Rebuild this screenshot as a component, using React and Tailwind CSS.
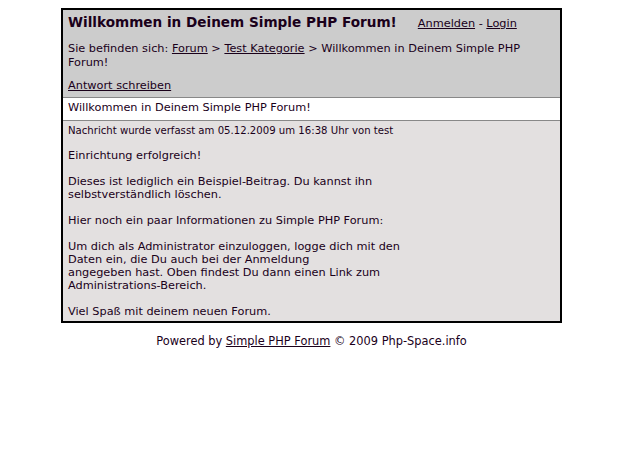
export default function App() {
  return (
    <div className="bg-white min-h-[461px] pt-2 font-['DejaVu_Sans',Verdana,sans-serif] text-[11.3px] text-[#1a001a]">
      <div className="w-[501px] ml-[61px] border-2 border-black">
        <div className="bg-[#cccccc] px-[5px] pt-[3px] pb-[4px] border-b border-[#888]">
          <div className="flex items-baseline whitespace-nowrap">
            <h1 className="text-[13.6px] font-bold leading-[18px]">Willkommen in Deinem Simple PHP Forum!</h1>
            <span className="ml-[21px]">
              <a href="#" className="underline">Anmelden</a> - <a href="#" className="underline">Login</a>
            </span>
          </div>
          <p className="mt-[9px] leading-[14px]">
            Sie befinden sich: <a href="#" className="underline">Forum</a> &gt; <a href="#" className="underline">Test Kategorie</a> &gt; Willkommen in Deinem Simple PHP Forum!
          </p>
          <p className="mt-[9px] leading-[14px]">
            <a href="#" className="underline">Antwort schreiben</a>
          </p>
        </div>
        <div className="bg-white px-[5px] h-[23px] flex items-center border-b border-[#888]">
          Willkommen in Deinem Simple PHP Forum!
        </div>
        <div className="bg-[#e3e0e0] px-[5px] pt-[3.5px] pb-[3.5px] leading-[13px]">
          <p className="text-[10.15px] leading-[13px]">Nachricht wurde verfasst am 05.12.2009 um 16:38 Uhr von test</p>
          <p className="mt-[11.5px]">Einrichtung erfolgreich!</p>
          <p className="mt-[13px]">
            Dieses ist lediglich ein Beispiel-Beitrag. Du kannst ihn<br />selbstverständlich löschen.
          </p>
          <p className="mt-[13px]">Hier noch ein paar Informationen zu Simple PHP Forum:</p>
          <p className="mt-[13px]">
            Um dich als Administrator einzuloggen, logge dich mit den<br />
            Daten ein, die Du auch bei der Anmeldung<br />
            angegeben hast. Oben findest Du dann einen Link zum<br />
            Administrations-Bereich.
          </p>
          <p className="mt-[13px]">Viel Spaß mit deinem neuen Forum.</p>
        </div>
      </div>
      <div className="w-[501px] ml-[61px] text-center mt-[11px] text-[11.4px] leading-[14px]">
        Powered by <a href="#" className="underline">Simple PHP Forum</a> © 2009 Php-Space.info
      </div>
    </div>
  );
}
